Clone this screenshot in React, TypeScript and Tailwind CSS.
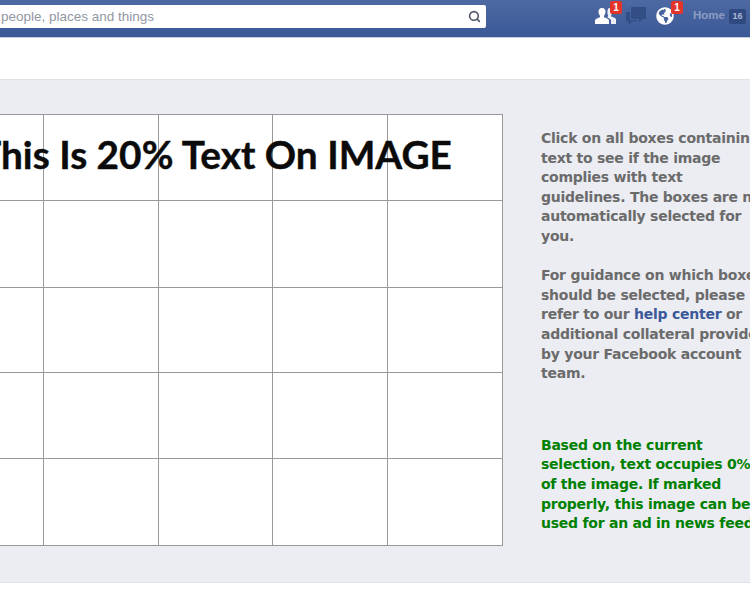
import { FaGlobeAmericas } from 'react-icons/fa';
import { Search } from 'lucide-react';

const rows = [0, 1, 2, 3, 4];
const cols = [0, 1, 2, 3, 4];

function Badge({ className }: { className: string }) {
  return (
    <span className={`absolute flex h-[13px] w-[12px] items-center justify-center rounded-[2px] bg-[#e3342a] text-[10px] leading-none font-bold text-white ${className}`}>
      1
    </span>
  );
}

function Friends() {
  return (
    <svg width="21" height="16" viewBox="0 0 21 16" fill="#fff">
      <path d="M14.500 0c2.200 0 3.300 1.500 3.100 3.600-.1 1.400-.6 2.600-1.400 3.300v1.500c1.700.7 4.200 1.200 4.800 2.700V16h-5v-3c0-1.500-1.500-2.600-3.600-3.400l.8-1.800c-.5-1-.8-2-.8-3.200C12.400 2 13 0 14.500 0z" opacity=".9" />
      <path d="M7 0c2.500 0 3.700 1.700 3.500 4-.1 1.500-.7 2.900-1.500 3.700v1.500c2 .8 4.300 1.300 5 2.900V16H0v-3.900c.7-1.600 3-2.100 5-2.900V7.700C4.200 6.900 3.600 5.500 3.500 4 3.300 1.700 4.500 0 7 0z" />
    </svg>
  );
}

function Messages() {
  return (
    <svg width="20" height="19" viewBox="0 0 20 19" fill="#324e85">
      <path d="M6 0h13a1 1 0 0 1 1 1v10a1 1 0 0 1-1 1h-2.500L13 15.500V12H6a1 1 0 0 1-1-1V1a1 1 0 0 1 1-1z" />
      <path d="M1 5h3v7a1 1 0 0 0 1 1h6.500l-.8 1.500H6L2.500 18.500v-4H1a1 1 0 0 1-1-1V6a1 1 0 0 1 1-1z" />
    </svg>
  );
}

export default function App() {
  return (
    <div className="h-[600px] w-[750px] overflow-hidden bg-white font-['Liberation_Sans',sans-serif]">
      <header className="flex h-[38px] items-start border-b border-[#c5cbd8] bg-gradient-to-b from-[#4e69a2] to-[#3b5998]">
        <div className="mt-[5px] flex h-[23px] w-[486px] shrink-0 items-center justify-between rounded-r-[2px] bg-white pr-[5px] pl-[1px] text-[13.500px] text-[#9197a3]">
          <span className="pt-[2px]">people, places and things</span>
          <Search size={13} strokeWidth={3} className="text-[#4e5665]" />
        </div>
        <div className="relative mt-[8px] ml-[109px] flex">
          <Friends />
          <Badge className="-top-[7px] left-[15px]" />
        </div>
        <div className="mt-[7px] ml-[10px]">
          <Messages />
        </div>
        <div className="relative mt-[7px] ml-[10px]">
          <FaGlobeAmericas size={18} className="text-white" />
          <Badge className="-top-[6px] left-[15px]" />
        </div>
        <span className="mt-[9px] ml-[19px] text-[11.500px] leading-[13px] font-bold text-[#8b9dc3]">Home</span>
        <span className="mt-[9px] ml-[4px] flex h-[15px] w-[17px] items-center justify-center rounded-[2px] bg-[#2f4a80] text-[9px] font-bold text-[#a9b7d3]">
          16
        </span>
      </header>

      <div className="h-[41px]" />

      <main className="flex h-[504px] items-start border-y border-[#e0e2e8] bg-[#ecedf3]">
        <div className="relative mt-[34px] ml-[-72px] grid w-[575px] shrink-0 grid-cols-5 grid-rows-[86px_87px_85px_86px_87px] border-t border-l border-[#999] bg-white">
          {rows.map((r) =>
            cols.map((c) => <div key={`${r}-${c}`} className="border-r border-b border-[#999]" />),
          )}
          <div className="absolute top-[12px] left-[49px] font-['Lato',sans-serif] text-[38.800px] leading-[54px] font-bold whitespace-nowrap text-[#0b0b0b] [-webkit-text-stroke:0.4px_#0b0b0b]">
            This Is 20% Text On IMAGE
          </div>
        </div>

        <aside className="mt-[49px] ml-[38px] w-[260px] shrink-0 font-['DejaVu_Sans',sans-serif] text-[14px] leading-[19.600px] font-bold tracking-[-0.25px] whitespace-nowrap text-[#6b6b6b]">
          <p>
            Click on all boxes containing
            <br />
            text to see if the image
            <br />
            complies with text
            <br />
            guidelines. The boxes are not
            <br />
            automatically selected for
            <br />
            you.
          </p>
          <p className="mt-[19.600px]">
            For guidance on which boxes
            <br />
            should be selected, please
            <br />
            refer to our <span className="text-[#3b5998]">help center</span> or
            <br />
            additional collateral provided
            <br />
            by your Facebook account
            <br />
            team.
          </p>
          <p className="mt-[52px] text-[#008000]">
            Based on the current
            <br />
            selection, text occupies 0%
            <br />
            of the image. If marked
            <br />
            properly, this image can be
            <br />
            used for an ad in news feed.
          </p>
        </aside>
      </main>
    </div>
  );
}
